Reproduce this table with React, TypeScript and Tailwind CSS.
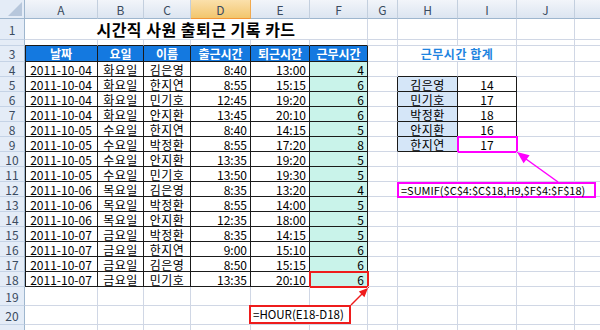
import type { ReactNode } from 'react'

const COLS = 'grid grid-cols-[25px_73px_46px_47px_60px_59px_58px_30px_60px_59px_58px_60px]'
const FONT = "font-['Noto_Sans_CJK_KR',sans-serif]"

const records: [string, string, string, string, string, number][] = [
  ['2011-10-04', '화요일', '김은영', '8:40', '13:00', 4],
  ['2011-10-04', '화요일', '한지연', '8:55', '15:15', 6],
  ['2011-10-04', '화요일', '민기호', '12:45', '19:20', 6],
  ['2011-10-04', '화요일', '안지환', '13:45', '20:10', 6],
  ['2011-10-05', '수요일', '한지연', '8:40', '14:15', 5],
  ['2011-10-05', '수요일', '박정환', '8:55', '17:20', 8],
  ['2011-10-05', '수요일', '안지환', '13:35', '19:20', 5],
  ['2011-10-05', '수요일', '민기호', '13:50', '19:30', 5],
  ['2011-10-06', '목요일', '김은영', '8:35', '13:20', 4],
  ['2011-10-06', '목요일', '박정환', '8:55', '14:00', 5],
  ['2011-10-06', '목요일', '안지환', '12:35', '18:00', 5],
  ['2011-10-07', '금요일', '박정환', '8:35', '14:15', 5],
  ['2011-10-07', '금요일', '한지연', '9:00', '15:10', 6],
  ['2011-10-07', '금요일', '김은영', '8:50', '15:15', 6],
  ['2011-10-07', '금요일', '민기호', '13:35', '20:10', 6],
]

// H5:I9
const totals: [string, number][] = [
  ['김은영', 14],
  ['민기호', 17],
  ['박정환', 18],
  ['안지환', 16],
  ['한지연', 17],
]

const Cell = ({ children, className = '' }: { children?: ReactNode; className?: string }) => (
  <div className={`flex items-center overflow-hidden whitespace-nowrap border-r border-b leading-[13px] ${className}`}>
    {children}
  </div>
)

const grid = 'border-[#d0d7e5]'
const dark = 'border-[#1a1a1a]'

const RowNum = ({ n, className = '' }: { n: number; className?: string }) => (
  <Cell className={`justify-center bg-[#e4ecf7] border-r-[#9eb6ce] border-b-[#c5d3e6] text-[12px] text-[#3a4b60] ${className}`}>
    {n}
  </Cell>
)

const letters = ['A', 'B', 'C', 'D', 'E', 'F', 'G', 'H', 'I', 'J', '']

const App = () => {
  return (
    <div className={`relative w-[600px] h-[330px] overflow-hidden bg-white text-black ${FONT}`}>
      {/* column headers */}
      <div className={`${COLS} h-[19px]`}>
        <Cell className="relative bg-[#e4ecf7] border-r-[#9eb6ce] border-b-[#9eb6ce]">
          <svg className="absolute right-[2px] bottom-[2px]" width="14" height="14" viewBox="0 0 14 14">
            <polygon points="14,0 14,14 0,14" fill="#b7c7dc" />
          </svg>
        </Cell>
        {letters.map((l, i) => (
          <Cell
            key={i}
            className={
              l === 'D'
                ? 'justify-center bg-gradient-to-b from-[#fbe0ab] to-[#f2c66c] border-r-[#f1a94e] border-b-[#f29536] text-[12px] text-[#3a4b60]'
                : 'justify-center bg-gradient-to-b from-[#f2f5fa] to-[#dce5f1] border-r-[#c3cfde] border-b-[#9eb6ce] text-[12px] text-[#3a4b60]'
            }
          >
            {l}
          </Cell>
        ))}
      </div>

      {/* row 1: title */}
      <div className={`${COLS} h-[21px]`}>
        <RowNum n={1} />
        <Cell className={`col-span-6 justify-center ${grid} text-[16px] leading-[18px] font-bold tracking-[0.5px]`}>
          시간직 사원 출퇴근 기록 카드
        </Cell>
        {[0, 1, 2, 3, 4].map((i) => (
          <Cell key={i} className={grid} />
        ))}
      </div>

      {/* row 2 */}
      <div className={`${COLS} h-[6px]`}>
        <Cell className="bg-[#e4ecf7] border-r-[#9eb6ce] border-b-[#c5d3e6]" />
        {[0, 1, 2, 3, 4, 5].map((i) => (
          <Cell key={i} className="border-r-[#d0d7e5] border-b-[#1a1a1a]" />
        ))}
        {[0, 1, 2, 3, 4].map((i) => (
          <Cell key={i} className={grid} />
        ))}
      </div>

      {/* row 3: headers */}
      <div className={`${COLS} h-[16px]`}>
        <RowNum n={3} />
        {['날짜', '요일', '이름', '출근시간', '퇴근시간', '근무시간'].map((h, i) => (
          <Cell
            key={h}
            className={`justify-center bg-[#1479e0] ${dark} text-[12px] font-bold text-white ${i === 0 ? 'shadow-[inset_1px_0_0_#1a1a1a]' : ''}`}
          >
            {h}
          </Cell>
        ))}
        <Cell className={grid} />
        <Cell className={`col-span-2 justify-center ${grid} text-[12px] font-bold text-[#1f84e0] tracking-[0.5px]`}>
          근무시간 합계
        </Cell>
        <Cell className={grid} />
        <Cell className={grid} />
      </div>

      {/* rows 4-18 */}
      {records.map((r, i) => {
        const rowNo = i + 4
        const total = rowNo >= 5 && rowNo <= 9 ? totals[rowNo - 5] : null
        const isLast = rowNo === 18
        return (
          <div key={rowNo} className={`${COLS} h-[15px]`}>
            <RowNum n={rowNo} />
            <Cell className={`justify-center ${dark} text-[12px] shadow-[inset_1px_0_0_#1a1a1a]`}>{r[0]}</Cell>
            <Cell className={`justify-center ${dark} text-[12px] tracking-[0.5px]`}>{r[1]}</Cell>
            <Cell className={`justify-center ${dark} text-[12px] tracking-[0.5px]`}>{r[2]}</Cell>
            <Cell className={`justify-end pr-[3px] ${dark} text-[12px]`}>{r[3]}</Cell>
            <Cell className={`justify-end pr-[3px] ${dark} text-[12px]`}>{r[4]}</Cell>
            <Cell
              className={`justify-end pr-[3px] bg-[#c9f3ea] ${dark} text-[12px] ${
                isLast ? 'outline-2 outline-solid outline-[#ee1c1c] -outline-offset-1' : ''
              }`}
            >
              {r[5]}
            </Cell>
            <Cell className={`${grid} ${total ? 'border-r-[#1a1a1a]' : ''}`} />
            {total ? (
              <>
                <Cell className={`justify-center bg-[#d5e6f8] ${dark} text-[12px] tracking-[0.5px]`}>{total[0]}</Cell>
                <Cell
                  className={`justify-center ${dark} text-[12px] ${
                    rowNo === 9 ? 'outline-2 outline-solid outline-[#ff00ff] -outline-offset-1' : ''
                  }`}
                >
                  {total[1]}
                </Cell>
              </>
            ) : (
              <>
                <Cell className={`${grid} ${rowNo === 4 ? 'border-b-[#1a1a1a]' : ''}`} />
                <Cell className={`${grid} ${rowNo === 4 ? 'border-b-[#1a1a1a]' : ''}`} />
              </>
            )}
            <Cell className={grid} />
            <Cell className={grid} />
          </div>
        )
      })}

      {/* rows 19-21 */}
      {[19, 20, 21].map((n) => (
        <div key={n} className={`${COLS} h-[19px]`}>
          <RowNum n={n} />
          {letters.map((l, i) => (
            <Cell key={i} className={grid} />
          ))}
        </div>
      ))}

      {/* formula callouts */}
      <div className="absolute left-[249px] top-[305px] w-[102px] h-[19px] flex items-center border-2 border-[#ee1c1c] bg-white pl-[2px] text-[11.5px] leading-[13px]">
        =HOUR(E18-D18)
      </div>
      <div className="absolute left-[397px] top-[182px] w-[199px] h-[16px] flex items-center border-2 border-[#ff00ff] bg-white pl-[2px] text-[11px] leading-[12px]">
        =SUMIF($C$4:$C$18,H9,$F$4:$F$18)
      </div>

      <svg className="pointer-events-none absolute inset-0" width="600" height="330" viewBox="0 0 600 330">
        <line x1="351" y1="305" x2="362" y2="294" stroke="#ee1c1c" strokeWidth="1.5" />
        <polygon points="368,288 364.4,297.2 358.8,291.6" fill="#ee1c1c" />
        <line x1="558" y1="182" x2="526" y2="159" stroke="#ff00ff" strokeWidth="1.5" />
        <polygon points="517,152 529.6,155.2 523.6,163.2" fill="#ff00ff" />
      </svg>
    </div>
  )
}

export default App
